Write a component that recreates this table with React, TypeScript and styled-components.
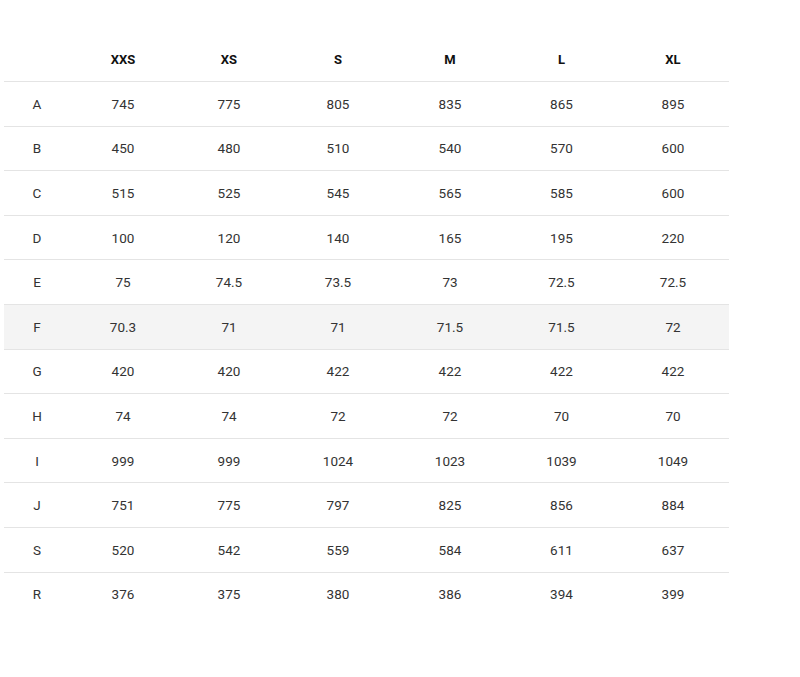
import React from "react";
import styled, { createGlobalStyle } from "styled-components";

const Global = createGlobalStyle`
  html, body { margin: 0; padding: 0; background: #fff; }
  body { font-family: Roboto, "Liberation Sans", sans-serif; }
`;

const Wrap = styled.div`
  padding: 37px 0 0 4px;
`;

const Table = styled.table`
  border-collapse: collapse;
  table-layout: fixed;
  width: 725px;
`;

const Col = styled.col<{ $w: number }>`
  width: ${(p) => p.$w}px;
`;

const HeadCell = styled.th`
  height: 44px;
  padding: 0;
  font-size: 13px;
  font-weight: 700;
  color: #111;
  text-align: center;
  vertical-align: middle;
  border-bottom: 1px solid #e4e4e4;
`;

const Row = styled.tr<{ $shade?: boolean; $last?: boolean }>`
  background: ${(p) => (p.$shade ? "#f4f4f4" : "transparent")};
  & > td {
    border-bottom: ${(p) => (p.$last ? "none" : "1px solid #e4e4e4")};
  }
`;

const Cell = styled.td`
  height: 43.6px;
  padding: 0;
  font-size: 13.5px;
  font-weight: 400;
  color: #333;
  text-align: center;
  vertical-align: middle;
`;

const sizes = ["XXS", "XS", "S", "M", "L", "XL"];
const rows: [string, string[]][] = [
  ["A", ["745", "775", "805", "835", "865", "895"]],
  ["B", ["450", "480", "510", "540", "570", "600"]],
  ["C", ["515", "525", "545", "565", "585", "600"]],
  ["D", ["100", "120", "140", "165", "195", "220"]],
  ["E", ["75", "74.5", "73.5", "73", "72.5", "72.5"]],
  ["F", ["70.3", "71", "71", "71.5", "71.5", "72"]],
  ["G", ["420", "420", "422", "422", "422", "422"]],
  ["H", ["74", "74", "72", "72", "70", "70"]],
  ["I", ["999", "999", "1024", "1023", "1039", "1049"]],
  ["J", ["751", "775", "797", "825", "856", "884"]],
  ["S", ["520", "542", "559", "584", "611", "637"]],
  ["R", ["376", "375", "380", "386", "394", "399"]],
];

const widths = [66, 106, 106, 112, 112, 111, 112];

export default function App() {
  return (
    <>
      <Global />
      <Wrap>
        <Table>
          <colgroup>
            {widths.map((w, i) => (
              <Col key={i} $w={w} />
            ))}
          </colgroup>
          <thead>
            <tr>
              <HeadCell />
              {sizes.map((s) => (
                <HeadCell key={s}>{s}</HeadCell>
              ))}
            </tr>
          </thead>
          <tbody>
            {rows.map(([label, vals], i) => (
              <Row key={label + i} $shade={label === "F"} $last={i === rows.length - 1}>
                <Cell>{label}</Cell>
                {vals.map((v, j) => (
                  <Cell key={j}>{v}</Cell>
                ))}
              </Row>
            ))}
          </tbody>
        </Table>
      </Wrap>
    </>
  );
}
